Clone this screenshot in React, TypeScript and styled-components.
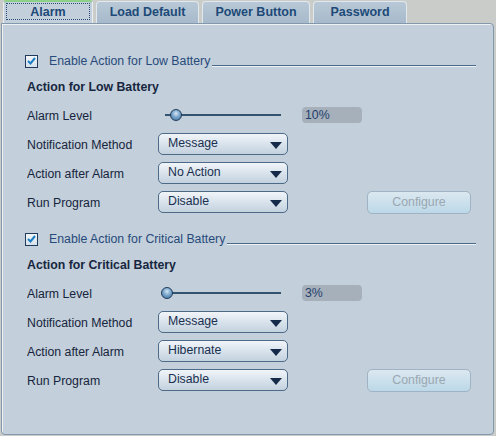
import { createGlobalStyle, styled } from 'styled-components';

const GlobalStyle = createGlobalStyle`
  html, body {
    margin: 0;
    padding: 0;
    background: #c9ccc8;
    font-family: "Liberation Sans", Arial, sans-serif;
    font-size: 12.3px;
  }
`;

const Frame = styled.div`
  width: 496px;
  height: 436px;
  display: flex;
  flex-direction: column;
  box-sizing: border-box;
`;

const TabBar = styled.div`
  display: flex;
  align-items: flex-end;
  gap: 3px;
  padding-left: 3px;
  height: 23px;
`;

const Tab = styled.div<{ $active?: boolean; $width: number }>`
  width: ${(p) => p.$width}px;
  height: ${(p) => (p.$active ? 23 : 22)}px;
  box-sizing: border-box;
  display: flex;
  align-items: center;
  justify-content: center;
  font-weight: bold;
  font-size: 12.5px;
  color: #1d4a78;
  border: 1px solid ${(p) => (p.$active ? '#e8eef3' : '#e1e8ee')};
  border-bottom: none;
  border-radius: 4px 4px 0 0;
  background: ${(p) => (p.$active
    ? '#c3cfda'
    : 'linear-gradient(#b8c8d6, #a7bacb)')};
  border-top: ${(p) => (p.$active ? '2px solid #8cd08a' : '1px solid #e1e8ee')};
  padding: 0 2px 1px;
`;

const FocusLabel = styled.span<{ $focus?: boolean }>`
  flex: 1;
  align-self: stretch;
  display: flex;
  align-items: center;
  justify-content: center;
  border: 1px dotted ${(p) => (p.$focus ? '#2a4e7a' : 'transparent')};
  margin: 1px 0 2px;
`;

const Panel = styled.div`
  flex: none;
  height: 412px;
  margin: 0 2px 0 1px;
  box-sizing: border-box;
  background: #c3cfda;
  border: 1px solid #8397ad;
  border-radius: 0 4px 4px 4px;
  box-shadow: inset 1px 1px 0 #eef2f5;
  padding: 30px 0 0 23px;
  display: flex;
  flex-direction: column;
  gap: 19px;
`;

const Section = styled.div`
  display: flex;
  flex-direction: column;
`;

const CheckRow = styled.div`
  display: flex;
  align-items: center;
  height: 14px;
  padding-right: 17px;
`;

const CheckBox = styled.span`
  width: 13px;
  height: 13px;
  box-sizing: border-box;
  border: 1px solid #1f3a5a;
  background: linear-gradient(#f2f6f9, #d6e1ea);
  display: flex;
  align-items: center;
  justify-content: center;
`;

const CheckLabel = styled.span`
  margin-left: 11px;
  color: #274a7a;
  white-space: nowrap;
`;

const Rule = styled.span`
  flex: 1;
  height: 1px;
  margin: 8px 0 0 2px;
  background: #4a6a88;
  box-shadow: 0 1px 0 #edf2f6;
`;

const SubTitle = styled.div`
  margin: 12px 0 0 2px;
  height: 14px;
  line-height: 14px;
  font-weight: bold;
  color: #17263f;
`;

const Grid = styled.div`
  margin-top: 10px;
  display: grid;
  grid-template-columns: 133px 130px 1fr;
  grid-auto-rows: 22px;
  row-gap: 7px;
  align-items: center;
`;

const Label = styled.span`
  padding: 2px 0 0 2px;
  color: #16253d;
`;

const SliderWrap = styled.div`
  position: relative;
  height: 14px;
  margin: 0 7px;
`;

const Track = styled.div`
  position: absolute;
  left: 0;
  right: 0;
  top: 6px;
  height: 2px;
  background: #34536f;
`;

const Knob = styled.div`
  position: absolute;
  top: 1px;
  width: 12px;
  height: 12px;
  margin-left: -7px;
  box-sizing: border-box;
  border-radius: 50%;
  border: 1px solid #223c5a;
  background: radial-gradient(circle at 50% 35%, #d4e6f5 0, #7ba6cc 45%, #3d6d9c 100%);
`;

const Percent = styled.div`
  margin-left: 14px;
  width: 60px;
  height: 16px;
  line-height: 16px;
  border-radius: 4px;
  background: #a6b0bb;
  color: #1f3f6c;
  padding-left: 3px;
  box-sizing: border-box;
`;

const Select = styled.div`
  height: 22px;
  box-sizing: border-box;
  border: 1px solid #4d6a88;
  border-radius: 5px;
  background: linear-gradient(#f1f5f9, #d4dfe9 60%, #c4d2df);
  display: flex;
  align-items: center;
  justify-content: space-between;
  padding: 0 5px 2px 9px;
  color: #1a3050;
`;

const Arrow = styled.span`
  width: 0;
  height: 0;
  border-left: 6px solid transparent;
  border-right: 6px solid transparent;
  border-top: 7px solid #142a48;
  margin-top: 4px;
`;

const Button = styled.button`
  margin-left: 79px;
  width: 104px;
  height: 23px;
  box-sizing: border-box;
  border: 1px solid #9fb3c4;
  border-radius: 5px;
  background: linear-gradient(#dbe8f0, #bcd8e8);
  color: #9ba7b1;
  font-family: inherit;
  font-size: 12.3px;
  padding: 0;
`;

interface BatterySection {
  enable: string;
  title: string;
  level: number;
  action: string;
}

const sections: BatterySection[] = [
  { enable: 'Enable Action for Low Battery', title: 'Action for Low Battery', level: 10, action: 'No Action' },
  { enable: 'Enable Action for Critical Battery', title: 'Action for Critical Battery', level: 3, action: 'Hibernate' },
];

function Check() {
  return (
    <CheckBox>
      <svg width="9" height="8" viewBox="0 0 9 8">
        <path d="M1 4 L3.5 6.5 L8 1" fill="none" stroke="#1c7fc4" strokeWidth="2" />
      </svg>
    </CheckBox>
  );
}

function Battery({ section }: { section: BatterySection }) {
  return (
    <Section>
      <CheckRow>
        <Check />
        <CheckLabel>{section.enable}</CheckLabel>
        <Rule />
      </CheckRow>
      <SubTitle>{section.title}</SubTitle>
      <Grid>
        <Label>Alarm Level</Label>
        <SliderWrap>
          <Track />
          <Knob style={{ left: `${section.level}%` }} />
        </SliderWrap>
        <Percent>
          {section.level}
          %
        </Percent>

        <Label>Notification Method</Label>
        <Select>
          Message
          <Arrow />
        </Select>
        <div />

        <Label>Action after Alarm</Label>
        <Select>
          {section.action}
          <Arrow />
        </Select>
        <div />

        <Label>Run Program</Label>
        <Select>
          Disable
          <Arrow />
        </Select>
        <div>
          <Button disabled>Configure</Button>
        </div>
      </Grid>
    </Section>
  );
}

export default function App() {
  return (
    <Frame>
      <GlobalStyle />
      <TabBar>
        <Tab $active $width={90}><FocusLabel $focus>Alarm</FocusLabel></Tab>
        <Tab $width={103}><FocusLabel>Load Default</FocusLabel></Tab>
        <Tab $width={108}><FocusLabel>Power Button</FocusLabel></Tab>
        <Tab $width={94}><FocusLabel>Password</FocusLabel></Tab>
      </TabBar>
      <Panel>
        {sections.map((s) => (
          <Battery key={s.title} section={s} />
        ))}
      </Panel>
    </Frame>
  );
}
